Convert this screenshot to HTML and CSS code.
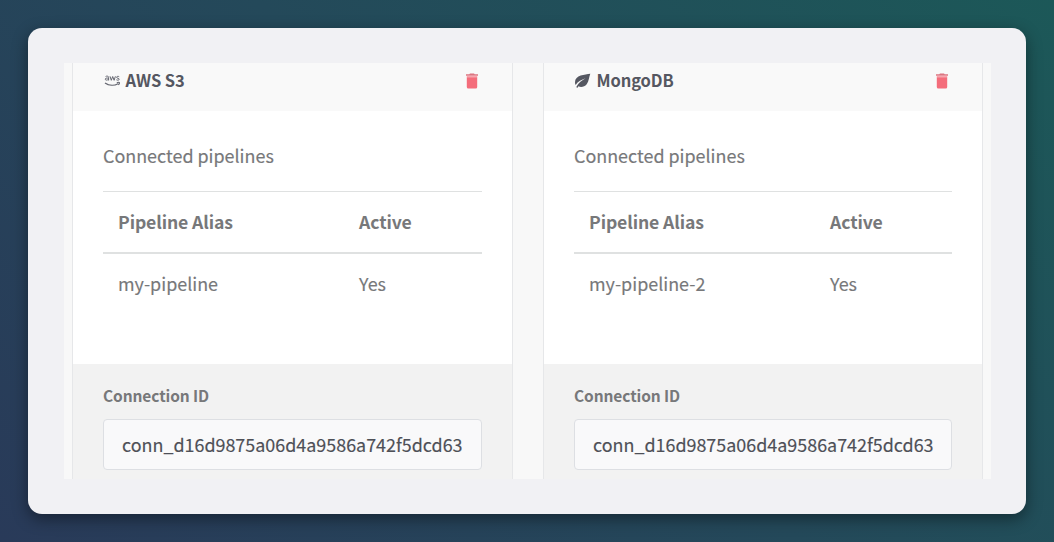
FILE: index.html
```html
<!DOCTYPE html>
<html lang="en">
<head>
<meta charset="utf-8">
<title>Connections</title>
<link rel="stylesheet" href="styles.css">
</head>
<body>
<main class="window">
  <div class="viewport">
    <section class="card">
      <header class="card-header">
        <svg class="brand" viewBox="0 0 17 16" fill="none" stroke="#646670">
          <path stroke-width="1" d="M2.600 3.500c.8-.6 3-.6 3 .8v3.200M5.400 5.200C3.600 4.800 2.300 5.100 2.300 6.200c0 1.400 2.500 1.100 3.200-.2M7 3.300l1.300 4 1.400-3.800 1.400 3.800 1.300-4M16.200 3.700c-1-.6-2.600-.4-2.600.6 0 1.200 2.600.7 2.600 1.900 0 1.200-1.800 1.200-2.800.6"/>
          <path stroke-width="1.200" d="M2 9.900c4 2.900 9.300 3 13 .8M13.800 9.700c1.200-.4 2.300-.4 2.500-.1.200.4-.2 1.500-.9 2.200"/>
        </svg>
        <h2 class="card-title">AWS S3</h2>
        <svg class="trash" viewBox="0 0 12 16"><path fill="#dc7480" d="M4 .5h4l.7.800H12v1.500H0V1.300h3.300z"/><path fill="#f8a6ae" d="M.8 2.800h10.400v1.500H.8z"/><path fill="#f46d7b" d="M.8 4.200h10.400v9.800q0 1.500-1.500 1.500H2.300Q.8 15.500.8 14z"/></svg>
      </header>
      <div class="card-body">
        <p class="caption">Connected pipelines</p>
        <div class="table">
          <div class="row head"><span>Pipeline Alias</span><span>Active</span></div>
          <div class="row"><span>my-pipeline</span><span>Yes</span></div>
        </div>
      </div>
      <footer class="card-footer">
        <div class="label">Connection ID</div>
        <div class="field">conn_d16d9875a06d4a9586a742f5dcd63</div>
      </footer>
    </section>
    <section class="card">
      <header class="card-header">
        <svg class="brand" viewBox="0 0 17 16"><path fill="#555761" d="M16.300.8C11 1.700 1 2 1 9.200c0 1.100.2 2 .6 2.700C4 8.600 7.500 6.700 11.600 5.300 7.800 7.400 4.700 9.800 2.300 14l.9.900 1.300-1.600c2.500 1.400 6.100.5 8.200-2.100C15 8.300 15 4 16.300.8z"/></svg>
        <h2 class="card-title">MongoDB</h2>
        <svg class="trash" viewBox="0 0 12 16"><path fill="#dc7480" d="M4 .5h4l.7.800H12v1.500H0V1.300h3.300z"/><path fill="#f8a6ae" d="M.8 2.800h10.400v1.500H.8z"/><path fill="#f46d7b" d="M.8 4.200h10.400v9.800q0 1.500-1.500 1.500H2.300Q.8 15.500.8 14z"/></svg>
      </header>
      <div class="card-body">
        <p class="caption">Connected pipelines</p>
        <div class="table">
          <div class="row head"><span>Pipeline Alias</span><span>Active</span></div>
          <div class="row"><span>my-pipeline-2</span><span>Yes</span></div>
        </div>
      </div>
      <footer class="card-footer">
        <div class="label">Connection ID</div>
        <div class="field">conn_d16d9875a06d4a9586a742f5dcd63</div>
      </footer>
    </section>
  </div>
</main>
</body>
</html>
```
FILE: styles.css
```css
* { box-sizing: border-box; }

body {
  margin: 0;
  height: 542px;
  padding: 28px;
  overflow: hidden;
  background: linear-gradient(45deg, #293a59 0%, #24495a 50%, #1c5858 100%);
  font-family: "Source Sans Pro", "Noto Sans CJK SC", sans-serif;
  font-size: 17.920px;
  color: #77787a;
}

.window {
  height: 486px;
  padding: 35px 35px 35px 36px;
  border-radius: 14px;
  background: #f1f1f4;
  box-shadow: 0 5px 16px rgba(0, 0, 0, .42);
}

.viewport {
  height: 416px;
  padding: 0 8px;
  display: grid;
  grid-template-columns: 441px 440px;
  gap: 30px;
  background: #f8f8f8;
}

.card {
  display: flex;
  flex-direction: column;
  border: solid #e6e7e9;
  border-width: 0 1px;
  background: #fff;
}

.card-header {
  height: 48px;
  padding: 0 34px 14px 30px;
  display: flex;
  align-items: center;
  background: #f9f9f9;
}

.brand { width: 17px; height: 16px; margin-top: 2px; }

.card-title {
  flex: 1;
  margin: 0 0 0 5.500px;
  font-size: 16.500px;
  line-height: 28px;
  font-weight: 700;
  letter-spacing: -.1px;
  color: #555761;
}

.trash { width: 12px; height: 16px; margin-top: 1px; }

.card-body { height: 253px; padding: 29px 30px 0; }

.caption { margin: 0 0 21px; line-height: 30px; -webkit-text-stroke: .15px; }

.row {
  height: 61px;
  padding: 0 15px 3px;
  display: grid;
  grid-template-columns: 241px 1fr;
  align-items: center;
  border-top: 1px solid #dfe1e1;
  -webkit-text-stroke: .15px;
}

.head {
  height: 63px;
  padding-bottom: 2px;
  font-size: 17.600px;
  font-weight: 700;
  letter-spacing: -.1px;
  border-bottom: 2px solid #dfe1e1;
  -webkit-text-stroke: 0;
}

.head + .row { border-top: 0; }

.card-footer { flex: 1; padding: 19px 30px 0; background: #f2f2f2; }

.label {
  height: 36px;
  line-height: 25px;
  font-size: 15.500px;
  font-weight: 700;
  letter-spacing: -.1px;
}

.field {
  height: 51px;
  padding: 0 18px;
  line-height: 48px;
  border: 1px solid #dddfe3;
  border-radius: 4px;
  background: #f9f9fa;
  color: #4e5057;
  white-space: nowrap;
  -webkit-text-stroke: .15px;
}
```
